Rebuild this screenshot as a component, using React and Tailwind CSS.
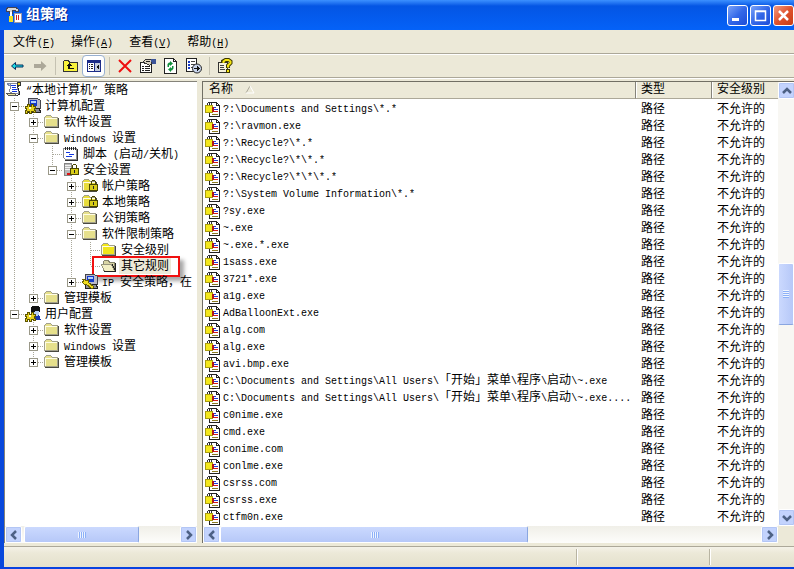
import { useState } from 'react'

const rules = [
  '?:\\Documents and Settings\\*.*',
  '?:\\ravmon.exe',
  '?:\\Recycle?\\*.*',
  '?:\\Recycle?\\*\\*.*',
  '?:\\Recycle?\\*\\*\\*.*',
  '?:\\System Volume Information\\*.*',
  '?sy.exe',
  '~.exe',
  '~.exe.*.exe',
  '1sass.exe',
  '3721*.exe',
  'a1g.exe',
  'AdBalloonExt.exe',
  'alg.com',
  'alg.exe',
  'avi.bmp.exe',
  'C:\\Documents and Settings\\All Users\\「开始」菜单\\程序\\启动\\~.exe',
  'C:\\Documents and Settings\\All Users\\「开始」菜单\\程序\\启动\\~.exe....',
  'c0nime.exe',
  'cmd.exe',
  'conime.com',
  'conlme.exe',
  'csrss.com',
  'csrss.exe',
  'ctfm0n.exe',
]

// guides: | line, T branch, L last branch, . empty
const tree = [
  { guides: '', icon: 'scroll', label: '“本地计算机” 策略' },
  { guides: 'T', box: '-', icon: 'computer', label: '计算机配置' },
  { guides: '|T', box: '+', icon: 'folder', label: '软件设置' },
  { guides: '|T', box: '-', icon: 'folder', label: 'Windows 设置' },
  { guides: '||T', icon: 'script', label: '脚本 (启动/关机)' },
  { guides: '||L', box: '-', icon: 'server', label: '安全设置' },
  { guides: '||.T', box: '+', icon: 'folderLock', label: '帐户策略' },
  { guides: '||.T', box: '+', icon: 'folderLock', label: '本地策略' },
  { guides: '||.T', box: '+', icon: 'folder', label: '公钥策略' },
  { guides: '||.T', box: '-', icon: 'folder', label: '软件限制策略' },
  { guides: '||.|T', icon: 'folderYellow', label: '安全级别' },
  { guides: '||.|L', icon: 'folderOpen', label: '其它规则', marked: true },
  { guides: '||.L', box: '+', icon: 'ipsec', label: 'IP 安全策略，在' },
  { guides: '|L', box: '+', icon: 'folder', label: '管理模板' },
  { guides: 'L', box: '-', icon: 'user', label: '用户配置' },
  { guides: '.T', box: '+', icon: 'folder', label: '软件设置' },
  { guides: '.T', box: '+', icon: 'folder', label: 'Windows 设置' },
  { guides: '.L', box: '+', icon: 'folder', label: '管理模板' },
]

// Latin runs are set smaller so that two of them fill one Chinese character
function Mixed({ text }) {
  return (
    <span className="whitespace-pre">
      {text.split(/([\u3000-\u9fff\uff00-\uffef]+)/).filter(Boolean).map((part, i) => (
        /[\u3000-\u9fff\uff00-\uffef]/.test(part)
          ? <span key={i}>{part}</span>
          : <span key={i} className="text-[10px]">{part}</span>
      ))}
    </span>
  )
}

function Icon({ children }) {
  return (
    <svg width="16" height="16" viewBox="0 0 16 16" shapeRendering="crispEdges" fill="none" aria-hidden="true" className="block shrink-0">
      {children}
    </svg>
  )
}

const folderBody = (fill) => (
  <>
    <path d="M0.5 3.5L2.5 1.5H6.5L8.5 3.5H13.5V12.5H0.5Z" fill={fill} stroke="#a3a18c" />
    <path d="M1 4.5H13M1.5 4V12" stroke="#fffde4" />
    <path d="M1 13.5H14.5V4" stroke="#4a4a40" />
  </>
)

const padlock = (
  <>
    <path d="M9.5 7V3.5L10.5 2.5H12.5L13.5 3.5V7" stroke="#4a4600" />
    <rect x="7.5" y="6.5" width="8" height="6" fill="#d8cc18" stroke="#4a4600" />
    <path d="M11 8H12V11H11Z" fill="#222" />
  </>
)

const monitor = (
  <>
    <path d="M3.5 0.5H12.5L15.5 2.5V10.5H3.5Z" fill="#b9b9c8" stroke="#44444c" />
    <path d="M5 2H12V8H5Z" fill="#1438c8" />
    <path d="M6 3H11V5H6Z" fill="#b4d0ff" />
    <path d="M3.500 10.500H14.500L15.500 14.500H3.500Z" fill="#8c8c98" stroke="#222" />
  </>
)

const gear = (
  <>
    <path d="M0 8H2V6H4V8H6V6H8V8H10V10H9V12H10V14H8V13H6V15H4V13H2V15H0V12H1V10H0Z" fill="#e6d21c" stroke="#5d5400" />
    <path d="M4 9H6V11H4Z" fill="#fffbe0" />
  </>
)

const treeIcons = {
  scroll: (
    <>
      <path d="M2.5 1.5H12.5L11.5 3.5L12.5 11.5H6.5L3.5 9.500L4.5 4.500Z" fill="#fff" stroke="#8a8a94" />
      <path d="M1.5 1.500H4.500V3.500H2.500Z" fill="#c4d0f0" stroke="#7c88a8" />
      <path d="M12 0.500H14.500V3.500H12.500L11.500 6V2Z" fill="#e6d21c" stroke="#333" />
      <path d="M0.5 11.5H8.5L10.5 13.5H2.500Z" fill="#e8e0a0" stroke="#555" />
      <path d="M12.500 6L13.500 12L11 14" stroke="#222" />
      <path d="M5 3.5H10M6 5.5H10M6 7.5H11M6 9.5H11" stroke="#1438e0" />
    </>
  ),
  computer: <>{monitor}{gear}</>,
  folder: folderBody('#e6e08c'),
  folderYellow: folderBody('#f0e61c'),
  folderOpen: (
    <>
      <path d="M2.5 12.5V3.5L3.5 2.5H7.5L8.5 4.5H13.5V12.5Z" fill="#d8d4a4" stroke="#85836c" />
      <path d="M0.5 6.5H10.5L13.5 13.5H3.5Z" fill="#f3efc4" stroke="#98967e" />
      <path d="M11 6L14.5 13M3 13.5H14.5V5" stroke="#222" />
    </>
  ),
  folderLock: <>{folderBody('#e8dc3c')}{padlock}</>,
  script: (
    <>
      <path d="M0.5 2.5H13.5V13.5H2.5L0.5 11.5Z" fill="#fff" stroke="#8a8a8a" />
      <path d="M2.500 1V4M4.500 1V4M6.500 1V4M8.500 1V4M10.500 1V4M12.500 1V4" stroke="#222" />
      <path d="M3 6.500H7M6 8.500H11M3 10.500H9" stroke="#1438e0" />
      <path d="M2 14.500H14.500V3" stroke="#333" />
    </>
  ),
  server: (
    <>
      <path d="M1.5 1.5H8.5V13.5H1.5Z" fill="#b8b8b8" stroke="#848484" />
      <path d="M2 3.5H8M2 5.5H8M2 7.5H7" stroke="#f2f2f2" />
      <path d="M4 11H7V13H4Z" fill="#e01010" />
      {padlock}
    </>
  ),
  ipsec: (
    <>
      {monitor}
      <path d="M0 5H2L4 7L7 6L6 8L12 13L10 15L4 10L2 10L0 8L2 7Z" fill="#f0dc20" stroke="#6d6400" />
    </>
  ),
  user: (
    <>
      <path d="M7 0H13L15 2V6L13 5H10L9 9L6 7V2Z" fill="#111" />
      <path d="M10 5H14V8L13 10H11L9 8Z" fill="#b8d0f4" />
      <path d="M8 11L14 9L16 14H8Z" fill="#1838b0" />
      {gear}
    </>
  ),
}

const toolIcons = {
  back: <path d="M2.5 8L6.500 4.500V7H14V9H6.500V11.500Z" fill="#18dce4" stroke="#083060" shapeRendering="auto" />,
  forward: <path d="M14.500 8L9 3V6H2V10H9V13Z" fill="#aca899" shapeRendering="auto" />,
  up: (
    <>
      <path d="M0.5 3.5L1.5 2.5H5.5L6.5 4.5H14.5V13.5H0.5Z" fill="#f8f23c" stroke="#333" />
      <path d="M6 5L3 8H5V11H11V10H7V8H9Z" fill="#111" />
    </>
  ),
  panes: (
    <>
      <rect x="1.5" y="2.5" width="13" height="11" fill="#fff" stroke="#1c2c88" />
      <path d="M1 2H15V5H1Z" fill="#1c2c88" />
      <path d="M8 5H9V13H8Z" fill="#1c2c88" />
      <path d="M9 5H14V13H9Z" fill="#c4ccdc" />
      <path d="M3 6.5H4M5 6.5H7M3 8.5H4M5 8.5H7M3 10.5H4M5 10.5H7" stroke="#222" />
      <path d="M13 6V12L10 9Z" fill="#111" />
    </>
  ),
  remove: <path d="M2 2L14 14M14 2L2 14" stroke="#ee1010" strokeWidth="2" shapeRendering="auto" />,
  properties: (
    <>
      <rect x="0.5" y="4.5" width="11" height="10" fill="#fff" stroke="#222" />
      <path d="M2 8.5H4M5 8.5H10M2 10.5H4M5 10.5H10M2 12.5H4M5 12.5H10" stroke="#222" />
      <path d="M2.5 4.5L5.5 1.500H11.500V5.500L9.500 7.500L6.500 5.500Z" fill="#d9d4c4" stroke="#333" />
      <path d="M6 3.5H10" stroke="#222" />
      <path d="M11 1H16V6H12Z" fill="#3c5498" />
    </>
  ),
  refresh: (
    <>
      <path d="M1.5 0.5H10.5L13.5 3.5V15.5H1.5Z" fill="#fff" stroke="#222" />
      <path d="M10.5 0.5V3.5H13.5" stroke="#222" />
      <path d="M4.500 9V6L6 4.500H7V3L10 5.500L7 8V6.500L6 7.500V9ZM10.500 8V10.500L9 12.500H8V14L5 11.500L8 9V10.500L9 9.500V8Z" fill="#10903c" shapeRendering="auto" />
    </>
  ),
  export: (
    <>
      <path d="M0.5 0.5H10.5V13.5H0.5Z" fill="#fff" stroke="#222" />
      <path d="M2 3.5H4M2 6.5H4M2 9.5H4" stroke="#1438c8" strokeWidth="2" />
      <path d="M5 3.5H9M5 6.5H9M5 9.5H7" stroke="#444" />
      <circle cx="11" cy="10.5" r="4.5" fill="#c8d4ec" stroke="#222" shapeRendering="auto" />
      <path d="M8 10H11V8L14 10.5L11 13V11H8Z" fill="#111" />
    </>
  ),
  help: (
    <>
      <path d="M1.5 4.5H10.5V14.5H1.5Z" fill="#f7f3dc" stroke="#333" />
      <path d="M3 7.5H7M3 9.5H7M3 11.5H8" stroke="#444" />
      <path d="M6 5V3.500L8.500 2H11.500L13.500 3.500V5L11 7.500V10" stroke="#3a3600" strokeWidth="4" shapeRendering="auto" />
      <path d="M6.500 5V3.500L8.500 2H11.500L13.500 3.500V5L11 7.500V9.500" stroke="#f4e410" strokeWidth="2" shapeRendering="auto" />
      <rect x="9.5" y="11.5" width="3" height="3" fill="#f4e410" stroke="#3a3600" />
    </>
  ),
}

function Guide({ kind, box }) {
  return (
    <svg width="19" height="16" viewBox="0 0 19 16" shapeRendering="crispEdges" aria-hidden="true" className="block shrink-0">
      {kind !== '.' && <path d={kind === 'L' ? 'M9.5 0V8' : 'M9.5 0V16'} stroke="#a9a799" strokeDasharray="1 1" />}
      {(kind === 'T' || kind === 'L') && <path d="M10 8.5H19" stroke="#a9a799" strokeDasharray="1 1" />}
      {box && (
        <>
          <rect x="5.5" y="4.5" width="8" height="8" fill="#fff" stroke="#9a9888" />
          <path d={box === '+' ? 'M7 8.5H12M9.5 6V11' : 'M7 8.5H12'} stroke="#000" />
        </>
      )}
    </svg>
  )
}

const arrows = {
  left: 'M10 4L6 8L10 12',
  right: 'M6 4L10 8L6 12',
  up: 'M4 10L8 6L12 10',
  down: 'M4 6L8 10L12 6',
}

function ArrowButton({ dir }) {
  return (
    <button type="button" aria-label={`Scroll ${dir}`} className="flex h-[17px] w-[17px] shrink-0 items-center justify-center rounded-xs border border-white bg-[#c3d3fd] outline -outline-offset-2 outline-[#b3c6f5]">
      <svg width="16" height="16" viewBox="0 0 16 16" fill="none" className="shrink-0"><path d={arrows[dir]} stroke="#4d6185" strokeWidth="2.5" /></svg>
    </button>
  )
}

function ScrollBar({ vertical, start, length }) {
  const thumb = vertical ? { height: `${length}%` } : { width: `${length}%` }
  const gap = vertical ? { height: `${start}%` } : { width: `${start}%` }
  return (
    <div className={vertical ? 'flex w-4 shrink-0 flex-col bg-[#f8f7f3]' : 'flex h-[17px] min-w-0 flex-1 bg-linear-to-b from-[#f0efe8] to-[#fdfdfb]'}>
      <ArrowButton dir={vertical ? 'up' : 'left'} />
      <div className={vertical ? 'flex flex-1 flex-col' : 'flex flex-1'}>
        <div style={gap} />
        <div
          style={thumb}
          className={vertical
            ? 'flex flex-col items-center justify-center gap-px rounded-xs border border-white border-b-[#8aa6e0] bg-linear-to-r from-[#cbd9fe] to-[#b6c8f8]'
            : 'flex items-center justify-center gap-px rounded-xs border border-white border-r-[#8aa6e0] bg-linear-to-b from-[#cbd9fe] to-[#b6c8f8]'}
        >
          {[0, 1, 2, 3].map(i => (
            <span key={i} className={vertical ? 'h-px w-1.5 bg-[#eef4fe] shadow-[0_1px_#8cb0f8]' : 'h-1.5 w-px bg-[#eef4fe] shadow-[1px_0_#8cb0f8]'} />
          ))}
        </div>
      </div>
      <ArrowButton dir={vertical ? 'down' : 'right'} />
    </div>
  )
}

function ToolButton({ name, label, pressed }) {
  return (
    <button
      type="button"
      aria-label={label}
      className={`flex h-[22px] w-[23px] shrink-0 items-center justify-center rounded-sm ${pressed ? 'border border-[#98b0d0] bg-white' : ''}`}
    >
      <Icon>{toolIcons[name]}</Icon>
    </button>
  )
}

function Separator() {
  return <span className="flex w-2 shrink-0 justify-center"><span className="h-[18px] w-px bg-[#c5c2b2]" /></span>
}

function CaptionButton({ label, close, children }) {
  return (
    <button
      type="button"
      aria-label={label}
      className={`flex h-[21px] w-[21px] shrink-0 items-center justify-center rounded-[3px] border border-white ${close ? 'bg-linear-to-br from-[#f09a80] via-[#e0522c] to-[#c83c14]' : 'bg-linear-to-br from-[#7ba2f8] via-[#3468e8] to-[#1c4cd8]'}`}
    >
      <svg width="19" height="19" viewBox="0 0 19 19" fill="none" className="shrink-0">{children}</svg>
    </button>
  )
}

function TreeRow({ node, selected, onSelect }) {
  return (
    <li className="relative flex h-4 items-center">
      {[...node.guides].map((kind, i) => (
        <Guide key={i} kind={kind} box={i === node.guides.length - 1 ? node.box : null} />
      ))}
      <button type="button" onClick={onSelect} className="flex h-4 items-center gap-0.5 pl-px">
        <Icon>{treeIcons[node.icon]}</Icon>
        <span className={`h-4 px-0.5 leading-[18px] ${selected ? 'bg-[#ece9d8]' : ''}`}><Mixed text={node.label} /></span>
      </button>
      {node.marked && (
        <span className="pointer-events-none absolute -top-0.5 left-[87px] h-[21px] w-[88px] border-2 border-[#f01010] shadow-[4px_4px_4px_rgba(0,0,0,0.35)]" />
      )}
    </li>
  )
}

export default function App() {
  const [selected, setSelected] = useState(11)

  return (
    <div className="flex min-h-screen flex-col overflow-hidden border-b-2 border-[#0842e0] bg-[#ece9d8] font-['Liberation_Mono','Noto_Sans_CJK_SC',monospace] text-xs text-black">
      <header className="flex h-[30px] items-center bg-linear-to-b from-[#3c90ff] via-[#0455e4] via-20% to-[#0562f8] pl-1.5">
        <Icon>
          <path d="M0 2L3 0H9L12 2V4H9V3H6V6H3V4H0Z" fill="#d8d8d8" stroke="#445" />
          <path d="M4 5H6V9H4Z" fill="#fff" />
          <path d="M3 9H7V15H3Z" fill="#f0e020" />
          <path d="M8 6H15V15H8Z" fill="#fff" stroke="#99a" />
          <path d="M10.500 8V13M12.500 8V13" stroke="#d02020" />
        </Icon>
        <h1 className="flex-1 pl-1 text-sm font-bold text-white [text-shadow:1px_1px_#0a2a90]">组策略</h1>
        <div className="flex gap-0.5">
          <CaptionButton label="最小化"><path d="M4 12H11V15H4Z" fill="#fff" /></CaptionButton>
          <CaptionButton label="最大化"><path d="M4.5 5H14.5V14.5H4.5ZM4 5.5H15" stroke="#fff" strokeWidth="1.5" /></CaptionButton>
          <CaptionButton label="关闭" close><path d="M5 5L14 14M14 5L5 14" stroke="#fff" strokeWidth="2.5" /></CaptionButton>
        </div>
      </header>

      <div className="flex flex-1 flex-col border-l-4 border-[#0848dc]">
        <nav className="flex h-6 items-center border-b border-[#aca899] pl-px shadow-[0_1px_#fff]">
          {[['文件', 'F'], ['操作', 'A'], ['查看', 'V'], ['帮助', 'H']].map(([label, key]) => (
            <button key={key} type="button" className="h-5 px-2 leading-[22px]">
              {label}<span className="text-[10px]">(<u>{key}</u>)</span>
            </button>
          ))}
        </nav>

        <div role="toolbar" className="flex h-6 items-center border-b border-[#aca899] pl-px shadow-[0_1px_#fff]">
          <ToolButton name="back" label="后退" />
          <ToolButton name="forward" label="前进" />
          <Separator />
          <ToolButton name="up" label="向上" />
          <ToolButton name="panes" label="显示/隐藏控制台树" pressed />
          <Separator />
          <ToolButton name="remove" label="删除" />
          <ToolButton name="properties" label="属性" />
          <ToolButton name="refresh" label="刷新" />
          <ToolButton name="export" label="导出列表" />
          <Separator />
          <ToolButton name="help" label="帮助" />
        </div>

        <main className="flex flex-1 gap-[5px] py-[3px]">
          <aside className="flex w-[193px] shrink-0 flex-col border-t border-l border-[#85837a] bg-white">
            <ul className="flex-1 overflow-hidden">
              {tree.map((node, i) => (
                <TreeRow key={i} node={node} selected={i === selected} onSelect={() => setSelected(i)} />
              ))}
            </ul>
            <div className="flex"><ScrollBar start={1} length={73} /></div>
          </aside>

          <section className="flex min-w-0 flex-1 flex-col border-t border-l border-[#716f64] bg-white">
            <div className="flex flex-1">
              <div className="min-w-0 flex-1">
                <table className="w-full table-fixed border-collapse">
                  <thead>
                    <tr>
                      {[['名称', ''], ['类型', 'w-[76px]'], ['安全级别', 'w-[67px]']].map(([label, width], i) => (
                        <th key={label} className={`p-0 pb-0.5 text-left font-normal ${width}`}>
                          <div className={`flex h-[17px] items-center gap-3 border-b border-[#aca899] bg-[#ece9d8] leading-[18px] whitespace-nowrap ${i ? 'border-l border-l-[#85837a] pl-[5px] shadow-[inset_1px_0_#fff]' : 'pl-1.5'}`}>
                            {label}
                            {i === 0 && <svg width="10" height="8" viewBox="0 0 10 8" fill="none"><path d="M5 0L1 7" stroke="#aca899" /><path d="M5 0L9 7H1" stroke="#fff" /></svg>}
                          </div>
                        </th>
                      ))}
                    </tr>
                  </thead>
                  <tbody>
                    {rules.map(rule => (
                      <tr key={rule}>
                        <td className="p-0">
                          <div className="flex h-[17px] items-center gap-0.5 pl-0.5 leading-[18px]">
                            <Icon>
                              <path d="M4.5 0.5H11.5L14.5 3.5V14.5H4.5Z" fill="#fff" stroke="#222" />
                              <path d="M11.5 0.5V3.5H14.5" stroke="#222" />
                              <path d="M8 5.5H11M8 7.5H13" stroke="#2038d8" />
                              <path d="M8 9.5H13" stroke="#d81818" />
                              <path d="M7 12.5H13" stroke="#8a7a20" />
                              <path d="M2.5 4V1.5L3.5 0.5H5.5L6.5 1.5V4" stroke="#333" />
                              <rect x="0.5" y="3.5" width="7" height="7" fill="#f4e81c" stroke="#a89c10" />
                              <path d="M7 5H9V10H7Z" fill="#b01818" />
                            </Icon>
                            <Mixed text={rule} />
                          </div>
                        </td>
                        <td className="p-0"><div className="h-[17px] pl-1.5 leading-[18px]">路径</div></td>
                        <td className="p-0"><div className="h-[17px] pl-1.5 leading-[18px] whitespace-nowrap">不允许的</div></td>
                      </tr>
                    ))}
                  </tbody>
                </table>
              </div>
              <ScrollBar vertical start={40} length={15} />
            </div>
            <div className="flex">
              <ScrollBar start={0} length={57} />
              <div className="w-4 bg-[#ece9d8]" />
            </div>
          </section>
        </main>

        <footer className="flex h-[21px] border-t border-[#aca899] bg-linear-to-b from-[#f4f2e8] via-[#ece9d8] via-30% to-[#e4e0cc] py-0.5">
          <div className="flex-1" />
          <div className="w-[133px] border-l border-[#b8b4a2] shadow-[inset_1px_0_#fff]" />
          <div className="w-[85px] border-l border-[#b8b4a2] shadow-[inset_1px_0_#fff]" />
        </footer>
      </div>
    </div>
  )
}
